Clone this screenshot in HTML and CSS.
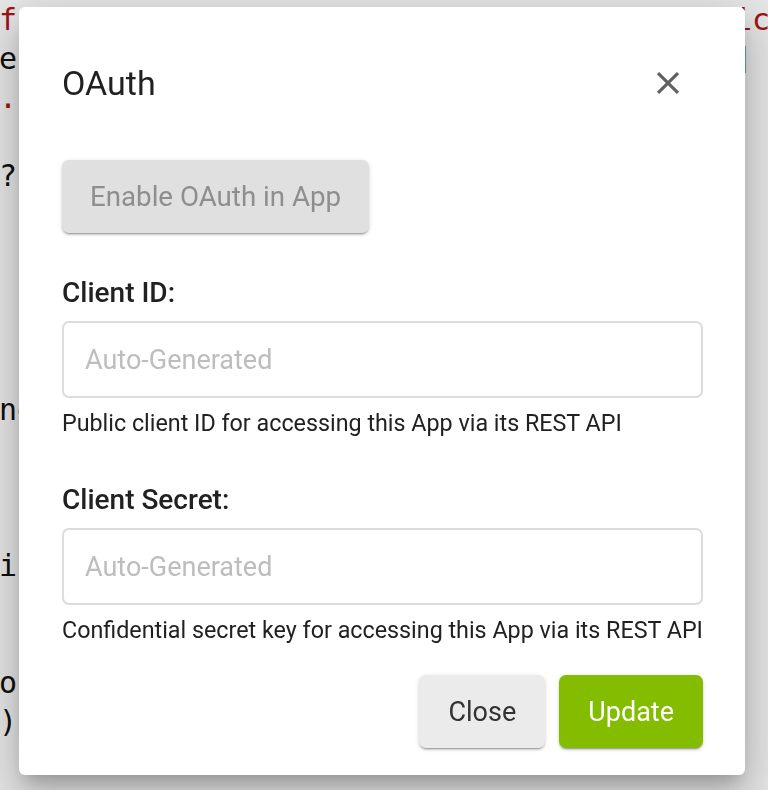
FILE: index.html
```html
<!DOCTYPE html>
<html lang="en">
<head>
<meta charset="utf-8">
<title>OAuth</title>
<link rel="stylesheet" href="styles.css">
</head>
<body>
<div class="editor">
  <div class="line"><span class="red">ff</span><span class="red right">ic</span></div>
  <div class="line"><span>e</span><span class="right">]</span></div>
  <div class="line"><span class="red">.</span></div>
  <div class="line"></div>
  <div class="line"><span>?</span></div>
  <div class="line"></div>
  <div class="line"></div>
  <div class="line"></div>
  <div class="line"></div>
  <div class="line"></div>
  <div class="line"><span>ne</span></div>
  <div class="line"></div>
  <div class="line"></div>
  <div class="line"></div>
  <div class="line"><span>ic</span></div>
  <div class="line"></div>
  <div class="line"></div>
  <div class="line"><span>op</span></div>
  <div class="line"><span>)</span></div>
</div>

<div class="backdrop">
  <div class="dialog">
    <div class="dialog-header">
      <h2 class="dialog-title">OAuth</h2>
      <button class="icon-btn" aria-label="Close">
        <svg viewBox="0 0 24 24" width="38" height="38"><path fill="#616161" d="M19 6.41L17.59 5 12 10.59 6.41 5 5 6.41 10.59 12 5 17.59 6.41 19 12 13.41 17.59 19 19 17.59 13.41 12z"/></svg>
      </button>
    </div>

    <div class="dialog-body">
      <button class="btn btn-disabled btn-enable" disabled>Enable OAuth in App</button>

      <div class="field field-first">
        <label class="field-label">Client ID:</label>
        <div class="input">Auto-Generated</div>
        <p class="helper">Public client ID for accessing this App via its REST API</p>
      </div>

      <div class="field">
        <label class="field-label">Client Secret:</label>
        <div class="input">Auto-Generated</div>
        <p class="helper">Confidential secret key for accessing this App via its REST API</p>
      </div>
    </div>

    <div class="dialog-actions">
      <button class="btn btn-light">Close</button>
      <button class="btn btn-green">Update</button>
    </div>
  </div>
</div>
</body>
</html>
```

FILE: styles.css
```css
* { box-sizing: border-box; }

html, body {
  margin: 0;
  padding: 0;
  width: 768px;
  height: 790px;
  overflow: hidden;
  background: #ffffff;
}

.editor {
  font-family: "DejaVu Sans Mono", monospace;
  font-size: 30px;
  line-height: 39px;
  color: #111;
  margin-left: -1px;
}

.line {
  display: grid;
  grid-template-columns: 735px 1fr;
  height: 39px;
  white-space: pre;
}

.red { color: #b01616; }
.right { grid-column: 2; }

.backdrop {
  position: fixed;
  inset: 0;
  background: rgba(0, 0, 0, 0.1);
  display: flex;
  align-items: flex-start;
  padding: 7px 0 0 19px;
}

.dialog {
  width: 726px;
  height: 768px;
  background: #fff;
  border-radius: 6px;
  box-shadow:
    0 11px 15px -7px rgba(0,0,0,0.2),
    0 24px 38px 3px rgba(0,0,0,0.14),
    0 9px 46px 8px rgba(0,0,0,0.12);
  padding: 56px 42px 27px 43px;
  display: flex;
  flex-direction: column;
  font-family: Roboto, "Liberation Sans", sans-serif;
  color: #212121;
}

.dialog-header {
  display: flex;
  align-items: center;
  justify-content: space-between;
  height: 40px;
}

.dialog-title {
  margin: 0;
  font-size: 34px;
  font-weight: 400;
  line-height: 40px;
}

.icon-btn {
  border: 0;
  background: none;
  padding: 0;
  width: 38px;
  height: 38px;
  margin-right: 16px;
  display: flex;
}

.dialog-body {
  display: flex;
  flex-direction: column;
  align-items: flex-start;
  margin-top: 57px;
}

.btn {
  font-family: Roboto, "Liberation Sans", sans-serif;
  font-size: 27px;
  height: 73px;
  padding: 0 29px;
  border: 0;
  border-radius: 7px;
  box-shadow: 0 3px 1px -2px rgba(0,0,0,0.2), 0 2px 2px 0 rgba(0,0,0,0.14), 0 1px 5px 0 rgba(0,0,0,0.12);
}

.btn-enable { font-size: 27.7px; padding: 0 28px; }

.btn-disabled {
  background: #e0e0e0;
  color: #8e8e8e;
}

.btn-light {
  background: #ebebeb;
  color: #333;
}

.btn-green {
  background: #84bd00;
  color: #fff;
}

.field {
  display: flex;
  flex-direction: column;
  width: 100%;
}

.field-first { margin-top: 42px; }
.field + .field { margin-top: 45px; }

.field-label {
  font-size: 28px;
  font-weight: 500;
  line-height: 36px;
  color: #212121;
}

.input {
  margin-top: 10px;
  height: 77px;
  border: 2px solid #dcdcdc;
  border-radius: 7px;
  padding: 0 21px;
  display: flex;
  align-items: center;
  font-size: 27px;
  color: #bdbdbd;
}

.helper {
  margin: 11px 0 0;
  font-size: 23.3px;
  line-height: 28px;
  color: #212121;
}

.dialog-actions {
  margin-top: auto;
  display: flex;
  justify-content: flex-end;
  gap: 14px;
}
```
